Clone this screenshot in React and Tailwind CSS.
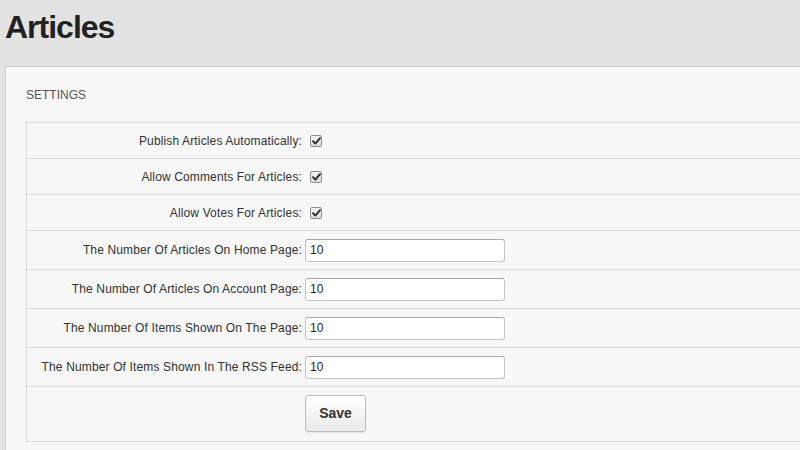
import React from "react";

function Check() {
  return (
    <span className="ml-[5px] inline-flex h-[12px] w-[12px] items-center justify-center rounded-[2px] border border-[#8e8e8e] bg-gradient-to-b from-[#f4f4f4] to-[#dcdcdc]">
      <svg width="9" height="8" viewBox="0 0 9 8">
        <path d="M1 4.2 L3.4 6.6 L8 1.2" fill="none" stroke="#2b2b2b" strokeWidth="1.9" strokeLinecap="round" strokeLinejoin="round" />
      </svg>
    </span>
  );
}

function Row({ label, children, h }) {
  return (
    <div className={`flex items-center border-t border-[#dadada] ${h}`}>
      <div className="w-[275px] text-right text-[12px] tracking-[0.14px] text-[#333]">{label}</div>
      <div className="ml-[3px] flex items-center">{children}</div>
    </div>
  );
}

function Input() {
  return (
    <div className="flex h-[23px] w-[200px] items-center rounded-[3px] border border-[#c4c4c4] border-t-[#a9a9a9] bg-white pl-[4px] text-[12px] text-[#222]">
      10
    </div>
  );
}

export default function App() {
  const checks = [
    "Publish Articles Automatically:",
    "Allow Comments For Articles:",
    "Allow Votes For Articles:",
  ];
  const inputs = [
    "The Number Of Articles On Home Page:",
    "The Number Of Articles On Account Page:",
    "The Number Of Items Shown On The Page:",
    "The Number Of Items Shown In The RSS Feed:",
  ];
  return (
    <div
      className="h-[450px] w-[800px] overflow-hidden bg-[#e2e2e2]"
      style={{ fontFamily: '"Liberation Sans", Arial, sans-serif' }}
    >
      <h1 className="mt-[11px] pl-[5px] text-[32px] font-bold leading-[32px] tracking-[-1px] text-[#222]">Articles</h1>
      <div className="ml-[5px] mt-[23px] w-[900px] border border-[#cdcdcd] bg-[#f7f7f7] pb-[20px] pl-[20px] pt-[21px]">
        <div className="text-[12px] leading-[14px] text-[#555]">SETTINGS</div>
        <div className="mt-[20px] w-[880px] border border-t-0 border-[#dadada]">
          {checks.map((l) => (
            <Row key={l} label={l} h="h-[36px]">
              <Check />
            </Row>
          ))}
          {inputs.map((l) => (
            <Row key={l} label={l} h="h-[39px]">
              <Input />
            </Row>
          ))}
          <div className="flex border-t border-[#dadada] pb-[9px] pt-[8px]">
            <div className="w-[278px]" />
            <button className="h-[37px] w-[61px] rounded-[3px] border border-[#bdbdbd] bg-gradient-to-b from-white to-[#e9e9e9] text-[14px] font-bold text-[#333] shadow-[0_1px_1px_rgba(0,0,0,0.08)]">
              Save
            </button>
          </div>
        </div>
      </div>
    </div>
  );
}
